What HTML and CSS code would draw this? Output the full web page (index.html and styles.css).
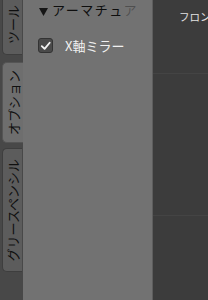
FILE: index.html
```html
<!DOCTYPE html>
<html lang="ja">
<head>
<meta charset="utf-8">
<link rel="stylesheet" href="styles.css">
</head>
<body>
<div class="app">
  <nav class="strip">
    <div class="tab tab-tools"><span class="tab-label">ツール</span></div>
    <div class="tab tab-active tab-options"><span class="tab-label">オプション</span></div>
    <div class="tab tab-gpencil"><span class="tab-label">グリースペンシル</span></div>
  </nav>
  <section class="panel">
    <div class="panel-header">
      <svg class="arrow" width="9" height="8" viewBox="0 0 9 8"><polygon points="0,0 9,0 4.5,8" fill="#161616"/></svg>
      <span class="panel-title">アーマチュ<span class="fade">ア</span></span>
    </div>
    <label class="row">
      <span class="checkbox">
        <svg width="14" height="14" viewBox="0 0 14 14"><polyline points="3,7.2 6,10 11.5,3.5" fill="none" stroke="#f2f2f2" stroke-width="2" stroke-linecap="round" stroke-linejoin="round"/></svg>
      </span>
      <span class="row-label">X軸ミラー</span>
    </label>
  </section>
  <main class="viewport">
    <div class="view-name">フロント・平行投影</div>
  </main>
</div>
</body>
</html>
```

FILE: styles.css
```css
html, body {
  margin: 0;
  padding: 0;
  width: 208px;
  height: 300px;
  overflow: hidden;
  background: #3d3d3d;
}
.app {
  display: flex;
  width: 208px;
  height: 300px;
  font-family: "Noto Sans CJK JP", "DejaVu Sans", sans-serif;
}
.strip {
  width: 23px;
  flex: none;
  background: #484848;
  display: flex;
  flex-direction: column;
}
.tab {
  margin-left: 2px;
  width: 20px;
  background: #5c5c5c;
  border: 1px solid #3e3e3e;
  border-right: none;
  border-radius: 5px 0 0 5px;
  box-sizing: border-box;
  display: flex;
  align-items: center;
  justify-content: center;
}
.tab-tools {
  margin-top: -6px;
  height: 61px;
}
.tab-options {
  margin-top: 7px;
  height: 81px;
}
.tab-gpencil {
  margin-top: 5px;
  height: 124px;
}
.tab-active {
  width: 21px;
  background: #6e6e6e;
  border-color: #555555;
}
.tab-label {
  writing-mode: vertical-rl;
  text-orientation: sideways;
  transform: rotate(180deg);
  font-size: 13px;
  color: #101010;
  line-height: 1;
  white-space: nowrap;
}
.panel {
  width: 129px;
  flex: none;
  background: #727272;
  border-right: 1px solid #5e5e5e;
  overflow: hidden;
}
.panel-header {
  height: 20px;
  display: flex;
  align-items: center;
  padding-left: 16px;
  gap: 4px;
  white-space: nowrap;
}
.arrow {
  flex: none;
  margin-top: 3px;
}
.panel-title {
  font-size: 13px;
  letter-spacing: 1.5px;
  color: #0e0e0e;
  line-height: 1;
  margin-top: -2px;
}
.fade {
  color: rgba(14, 14, 14, 0.35);
}
.row {
  display: flex;
  align-items: center;
  margin-top: 18px;
  padding-left: 15px;
}
.checkbox {
  width: 15px;
  height: 15px;
  box-sizing: border-box;
  background: #4a4a4a;
  border: 1px solid #333333;
  border-radius: 3px;
  display: flex;
  align-items: center;
  justify-content: center;
}
.row-label {
  margin-left: 12px;
  font-size: 13px;
  color: #f0f0f0;
  line-height: 1;
  white-space: nowrap;
}
.viewport {
  flex: 1;
  background-color: #3c3c3c;
  background-image:
    linear-gradient(to bottom, transparent 73px, #444444 73px, #444444 74px, transparent 74px),
    linear-gradient(to bottom, transparent 215px, #444444 215px, #444444 216px, transparent 216px);
  overflow: hidden;
}
.view-name {
  padding: 11px 0 0 26px;
  font-size: 10.5px;
  color: #e2e2e2;
  white-space: nowrap;
  line-height: 1.2;
}
```
